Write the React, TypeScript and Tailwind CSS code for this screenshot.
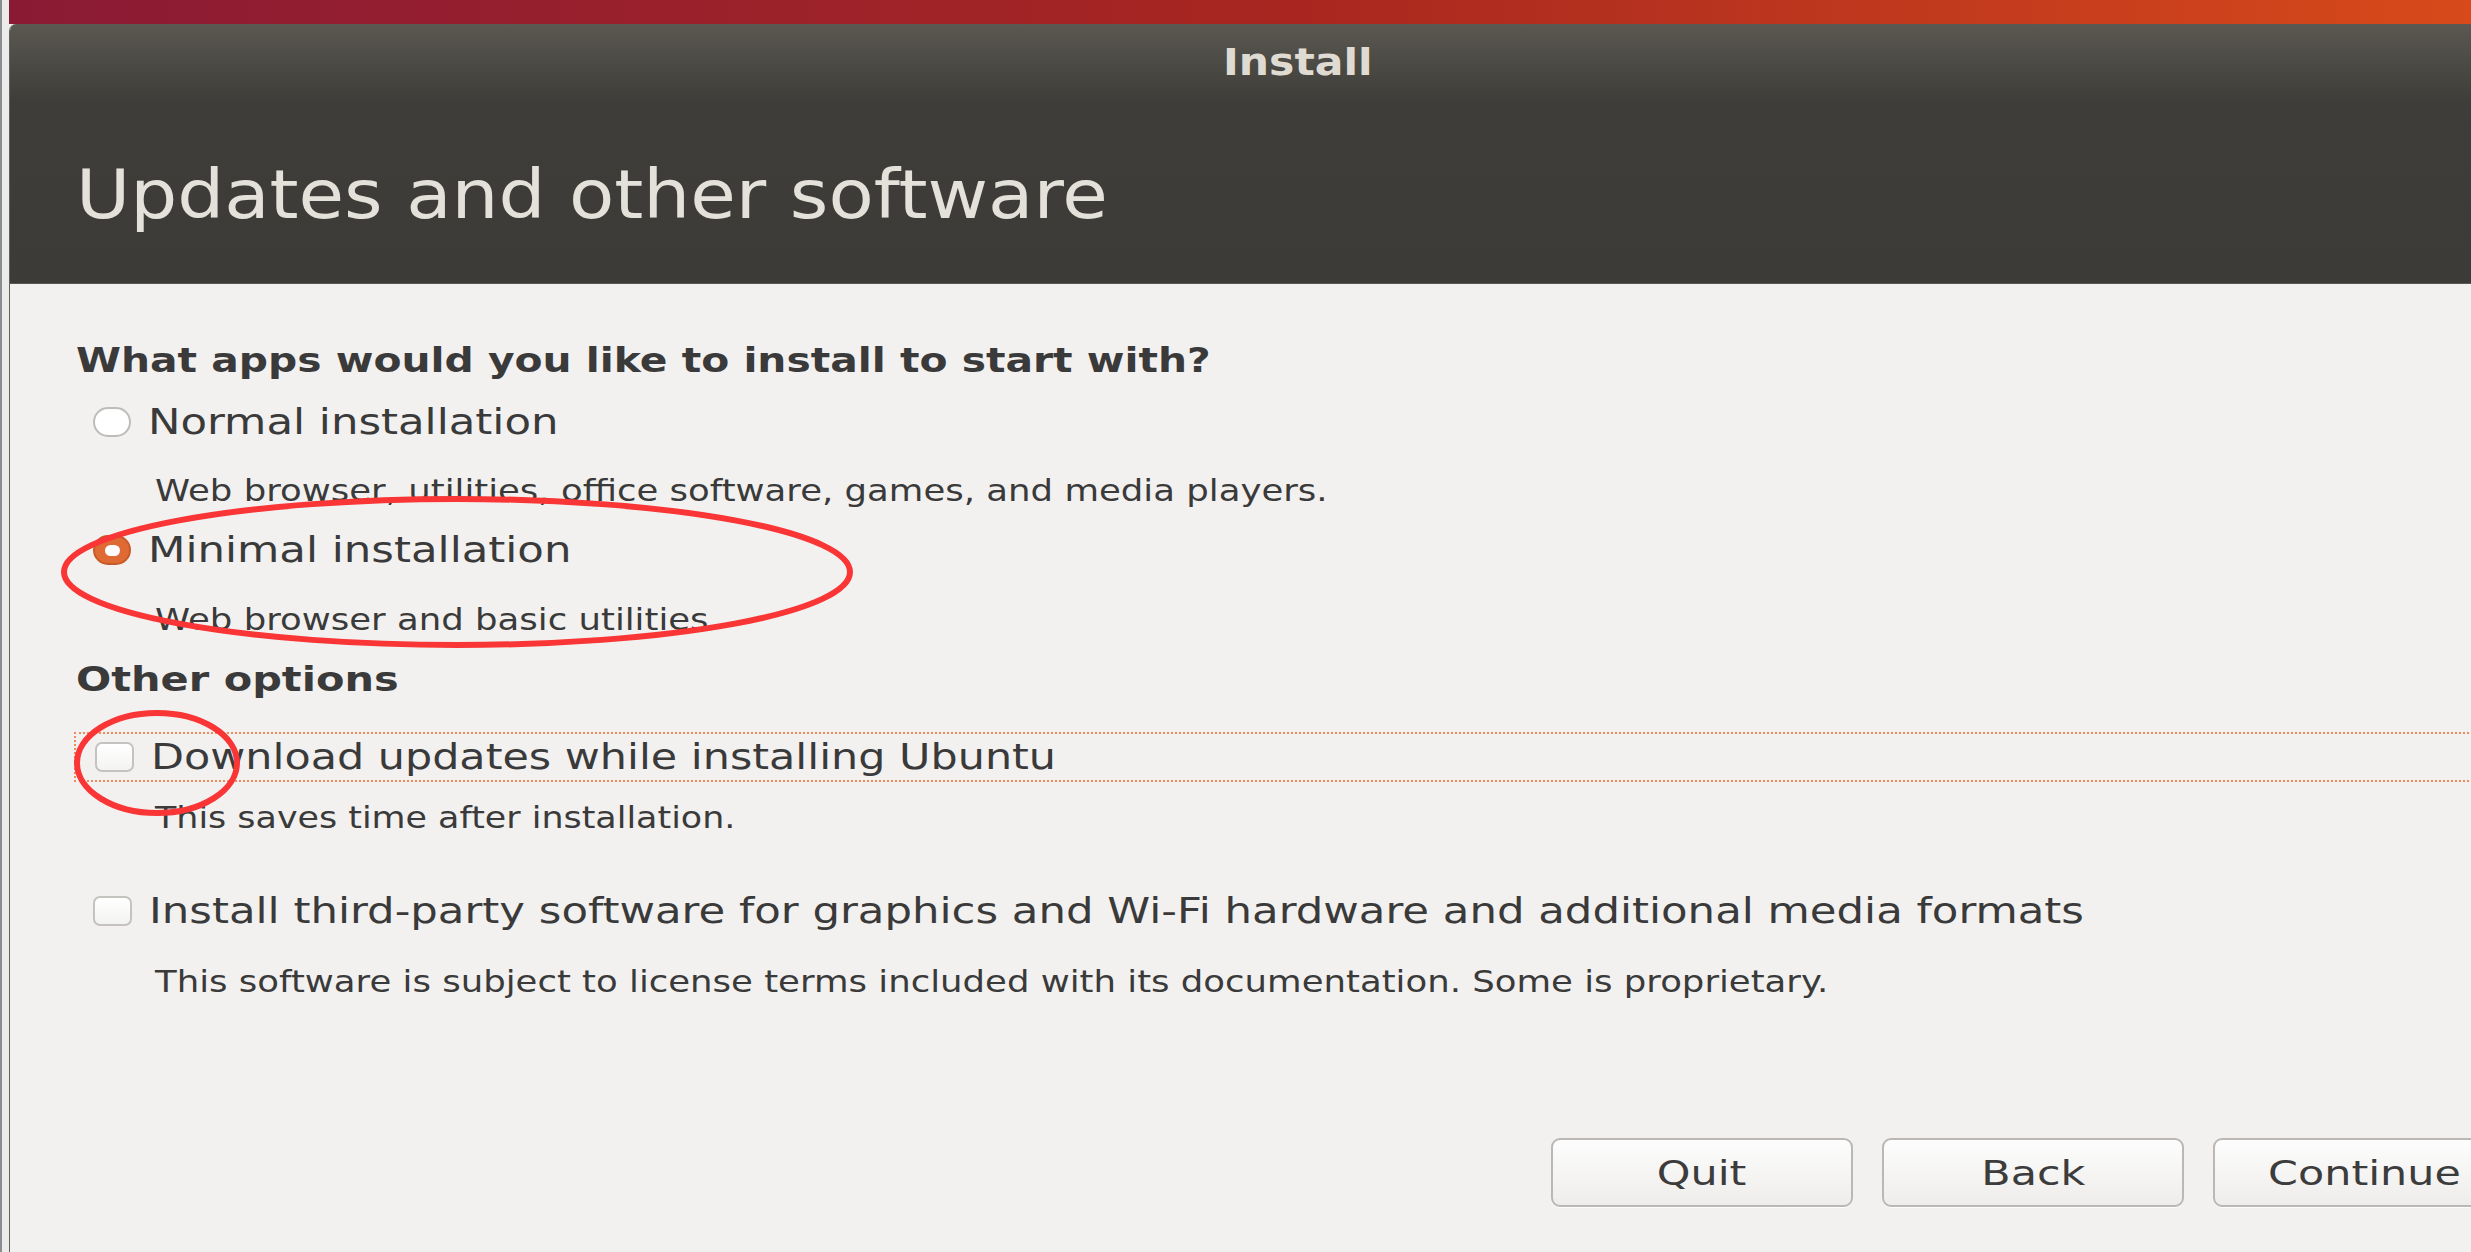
import React from "react";

const font = "font-['DejaVu_Sans',sans-serif]";

function Radio({ checked }: { checked?: boolean }) {
  if (checked) {
    return (
      <div className="w-[38px] h-[30px] rounded-full bg-[#df6a34] border-2 border-[#c85a28] flex items-center justify-center shrink-0">
        <div className="w-[15px] h-[11px] rounded-full bg-white" />
      </div>
    );
  }
  return (
    <div className="w-[38px] h-[30px] rounded-full bg-white border-2 border-[#bdbcb9] shrink-0" />
  );
}

function Check() {
  return (
    <div className="w-[39px] h-[30px] rounded-[7px] bg-gradient-to-b from-[#ffffff] to-[#f3f3f2] border-2 border-[#c4c3c0] shrink-0" />
  );
}

function Btn({ label }: { label: string }) {
  return (
    <button className="w-[302px] h-[69px] rounded-[9px] border-2 border-[#b9b8b5] bg-gradient-to-b from-[#fdfdfd] to-[#eeedeb] flex items-center justify-center text-[#3c3c3c] text-[34px] leading-none shadow-[0_1px_0_rgba(255,255,255,0.8)]">
      <span className="inline-block origin-center scale-x-[1.26] whitespace-nowrap">{label}</span>
    </button>
  );
}

export default function App() {
  return (
    <div className={`relative w-screen h-[1252px] overflow-hidden flex ${font} bg-[#eeeeec]`}>
      <div className="w-[2px] h-full bg-[#8a8e93] shrink-0" />
      <div className="w-[7px] h-full bg-[#ececeb] shrink-0" />
      <div className="flex flex-col shrink-0 w-[2576px] h-full">
        <div className="h-[24px] w-full bg-gradient-to-r from-[#8a1a34] via-[#a8261f] to-[#dc4d19] shrink-0" />
        <div className="flex-1 flex flex-col rounded-tl-[7px] overflow-hidden bg-[#f2f1f0] border-l border-[#606060]">
          {/* header */}
          <div className="h-[260px] shrink-0 flex flex-col bg-gradient-to-b from-[#5b5851] via-[#3e3d39] via-[30%] to-[#3c3b37] border-b border-[#5a5853]">
            <div className="h-[76px] flex items-center justify-center">
              <span className="inline-block origin-center scale-x-[1.12] text-[38px] leading-none font-bold text-[#dfdbd2] whitespace-nowrap">
                Install
              </span>
            </div>
            <div className="mt-[61px] pl-[66px] h-[68px] flex items-center">
              <span className="inline-block origin-left scale-x-[1.105] text-[67px] leading-none font-normal text-[#e4e1da] whitespace-nowrap">
                Updates and other software
              </span>
            </div>
          </div>

          {/* body */}
          <div className="flex-1 flex flex-col pl-[66px] text-[#3a3a3a]">
            <div className="mt-[56px] h-[40px] flex items-center">
              <span className="inline-block origin-left scale-x-[1.2] text-[34px] leading-none font-bold whitespace-nowrap">
                What apps would you like to install to start with?
              </span>
            </div>

            <div className="mt-[22px] h-[40px] flex items-center pl-[17px] gap-[17px]">
              <Radio />
              <span className="inline-block origin-left scale-x-[1.24] text-[35px] leading-none whitespace-nowrap">
                Normal installation
              </span>
            </div>
            <div className="mt-[28px] h-[40px] flex items-center pl-[79px]">
              <span className="inline-block origin-left scale-x-[1.145] text-[31px] leading-none whitespace-nowrap">
                Web browser, utilities, office software, games, and media players.
              </span>
            </div>

            <div className="mt-[20px] h-[40px] flex items-center pl-[17px] gap-[17px]">
              <Radio checked />
              <span className="inline-block origin-left scale-x-[1.24] text-[35px] leading-none whitespace-nowrap">
                Minimal installation
              </span>
            </div>
            <div className="mt-[29px] h-[40px] flex items-center pl-[79px]">
              <span className="inline-block origin-left scale-x-[1.145] text-[31px] leading-none whitespace-nowrap">
                Web browser and basic utilities
              </span>
            </div>

            <div className="mt-[20px] h-[40px] flex items-center">
              <span className="inline-block origin-left scale-x-[1.22] text-[34px] leading-none font-bold whitespace-nowrap">
                Other options
              </span>
            </div>

            <div className="mt-[33px] ml-[-2px] h-[50px] flex items-center pl-[19px] gap-[17px] border-2 border-dotted border-[#f08a5d]">
              <Check />
              <span className="inline-block origin-left scale-x-[1.225] text-[35px] leading-none whitespace-nowrap">
                Download updates while installing Ubuntu
              </span>
            </div>
            <div className="mt-[15px] h-[40px] flex items-center pl-[79px]">
              <span className="inline-block origin-left scale-x-[1.125] text-[31px] leading-none whitespace-nowrap">
                This saves time after installation.
              </span>
            </div>

            <div className="mt-[54px] h-[40px] flex items-center pl-[17px] gap-[17px]">
              <Check />
              <span className="inline-block origin-left scale-x-[1.24] text-[35px] leading-none whitespace-nowrap">
                Install third-party software for graphics and Wi-Fi hardware and additional media formats
              </span>
            </div>
            <div className="mt-[30px] h-[40px] flex items-center pl-[79px]">
              <span className="inline-block origin-left scale-x-[1.145] text-[31px] leading-none whitespace-nowrap">
                This software is subject to license terms included with its documentation. Some is proprietary.
              </span>
            </div>

            <div className="mt-[137px] flex justify-end gap-[29px] pr-[70px]">
              <Btn label="Quit" />
              <Btn label="Back" />
              <Btn label="Continue" />
            </div>
          </div>
        </div>
      </div>

      {/* annotation marks */}
      <svg
        className="absolute left-0 top-0 pointer-events-none"
        width="2471"
        height="1252"
        viewBox="0 0 2471 1252"
      >
        <ellipse cx="457" cy="572" rx="393" ry="73" fill="none" stroke="#f93535" strokeWidth="6" />
        <ellipse cx="157" cy="763" rx="80" ry="50" fill="none" stroke="#f93535" strokeWidth="6" />
      </svg>
    </div>
  );
}
